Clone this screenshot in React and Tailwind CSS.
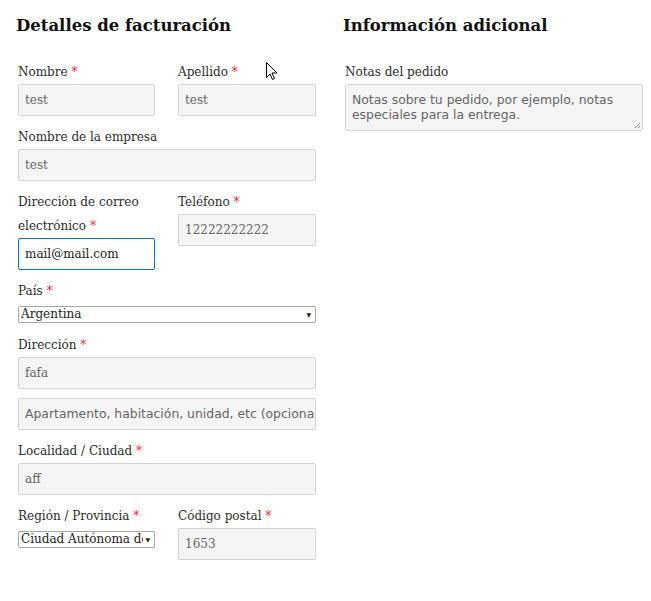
const serif = { fontFamily: '"DejaVu Serif", "Liberation Serif", serif' };
const sans = { fontFamily: '"DejaVu Sans", "Open Sans", sans-serif' };

const Req = () => <span className="text-[#f5222d]"> *</span>;

const Label = ({ children, required, className = '' }) => (
  <div className={`text-[12px] leading-[24px] text-[#2b2b2b] ${className}`}>
    {children}
    {required && <Req />}
  </div>
);

const Input = ({ value, placeholder, focused }) => (
  <div
    className={`h-[32px] rounded-[2px] border px-[6px] flex items-center text-[12px] whitespace-nowrap overflow-hidden ${
      focused ? 'border-[#0a74c9] bg-white text-[#222]' : 'border-[#d3d3d3] bg-[#f5f5f5] text-[#666]'
    }`}
    style={placeholder ? { ...sans, fontSize: 12.4 } : undefined}
  >
    {value || placeholder}
  </div>
);

const Select = ({ value }) => (
  <div className="h-[17px] border border-[#a9a9a9] rounded-[2px] bg-white flex items-center pl-[2px] pr-[4px] mt-[3px] text-[12px] leading-[15px] text-[#222]">
    <span className="flex-1 min-w-0 whitespace-nowrap overflow-hidden">{value}</span>
    <span className="text-[6px] leading-none ml-[2px]">▼</span>
  </div>
);

const Field = ({ label, required, children, className = '' }) => (
  <div className={`mb-[9px] ${className}`}>
    <Label required={required}>{label}</Label>
    {children}
  </div>
);

export default function App() {
  return (
    <div className="relative w-[651px] h-[601px] bg-white" style={serif}>
      <div className="flex gap-[29px] pl-[18px] pt-[13px]">
        {/* Billing */}
        <div className="w-[298px]">
          <h3 className="text-[16.5px] font-bold leading-[24px] text-[#111] -ml-[2px] mt-px mb-[22px]">Detalles de facturación</h3>

          <div className="flex gap-[23px]">
            <Field label="Nombre" required className="w-[137px]">
              <Input value="test" />
            </Field>
            <Field label="Apellido" required className="flex-1">
              <Input value="test" />
            </Field>
          </div>

          <Field label="Nombre de la empresa">
            <Input value="test" />
          </Field>

          <div className="flex gap-[23px]">
            <Field label="Dirección de correo electrónico" required className="w-[137px]">
              <Input value="mail@mail.com" focused />
            </Field>
            <Field label="Teléfono" required className="flex-1">
              <Input value="12222222222" />
            </Field>
          </div>

          <div className="mb-[10px]">
            <Label required>País</Label>
            <Select value="Argentina" />
          </div>

          <div className="mb-[9px]">
            <Label required>Dirección</Label>
            <Input value="fafa" />
            <div className="mt-[9px]">
              <Input placeholder="Apartamento, habitación, unidad, etc (opcional)" />
            </div>
          </div>

          <Field label="Localidad / Ciudad" required>
            <Input value="aff" />
          </Field>

          <div className="flex gap-[23px]">
            <div className="w-[137px]">
              <Label required>Región / Provincia</Label>
              <Select value="Ciudad Autónoma de Buenos Aires" />
            </div>
            <Field label="Código postal" required className="flex-1">
              <Input value="1653" />
            </Field>
          </div>
        </div>

        {/* Additional info */}
        <div className="w-[298px]">
          <h3 className="text-[16.5px] font-bold leading-[24px] text-[#111] -ml-[2px] mt-px mb-[22px]">Información adicional</h3>
          <Label>Notas del pedido</Label>
          <div
            className="relative h-[47px] rounded-[2px] border border-[#d3d3d3] bg-[#f5f5f5] px-[6px] pt-[7px] text-[12.4px] leading-[15px] text-[#666]"
            style={sans}
          >
            Notas sobre tu pedido, por ejemplo, notas especiales para la entrega.
            <svg className="absolute right-[1px] bottom-[1px]" width="7" height="7" viewBox="0 0 7 7">
              <path d="M6 1 L1 6 M6 4 L4 6" stroke="#888" strokeWidth="1" />
            </svg>
          </div>
        </div>
      </div>

      {/* mouse pointer */}
      <svg className="absolute left-[266px] top-[62px]" width="13" height="19" viewBox="0 0 13 19">
        <path d="M0.5 0.5 L0.5 15.5 L4 12 L6.5 17.5 L8.5 16.5 L6 11 L11 11 Z" fill="white" stroke="black" strokeWidth="1" strokeLinejoin="miter" />
      </svg>
    </div>
  );
}
